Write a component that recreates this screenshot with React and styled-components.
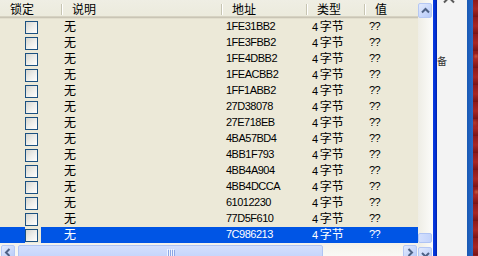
import React from 'react';
import styled, { createGlobalStyle } from 'styled-components';

const GlobalStyle = createGlobalStyle`
  html, body {
    margin: 0;
    padding: 0;
    background: #ECE9D8;
    overflow: hidden;
  }
  body {
    font-family: "Liberation Sans", "Noto Sans CJK SC", sans-serif;
  }
`;

const columns = [
  { key: 'lock', title: '锁定', width: 62 },
  { key: 'desc', title: '说明', width: 160 },
  { key: 'addr', title: '地址', width: 85 },
  { key: 'type', title: '类型', width: 58 },
  { key: 'value', title: '值', width: 53 },
];

const addresses = [
  '1FE31BB2', '1FE3FBB2', '1FE4DBB2', '1FEACBB2', '1FF1ABB2', '27D38078', '27E718EB',
  '4BA57BD4', '4BB1F793', '4BB4A904', '4BB4DCCA', '61012230', '77D5F610', '7C986213',
];

const Arrow = ({ dir }) => {
  const paths = {
    up: 'M1 5.5 L4.5 2 L8 5.5',
    down: 'M1 2 L4.5 5.5 L8 2',
    left: 'M5.5 1 L2 4.5 L5.5 8',
    right: 'M2.5 1 L6 4.5 L2.5 8',
  };
  const w = dir === 'up' || dir === 'down' ? 9 : 8;
  const h = dir === 'up' || dir === 'down' ? 8 : 9;
  return (
    <svg width={w} height={h} viewBox={`0 0 ${w} ${h}`}>
      <path d={paths[dir]} fill="none" stroke="#4D6185" strokeWidth="2" />
    </svg>
  );
};

const App = () => {
  return (
    <>
      <GlobalStyle />
      <Page>
        <ListPane>
          <Header>
            {columns.map((c, i) => (
              <HeaderCell key={c.key} $w={c.width} $sep={i < columns.length - 1}>
                {c.title}
              </HeaderCell>
            ))}
          </Header>

          {addresses.map((addr, i) => {
            const selected = i === addresses.length - 1;
            return (
              <Row key={addr} $selected={selected}>
                <CheckCell>
                  <CheckHolder>
                    <CheckBox />
                  </CheckHolder>
                </CheckCell>
                <Cell $w={160} $pad={2}>无</Cell>
                <Cell $w={85} $pad={4} $num>{addr}</Cell>
                <Cell $w={58} $pad={5}>
                  <Digit>4</Digit>字节
                </Cell>
                <Cell $w={53} $pad={4} $num>??</Cell>
              </Row>
            );
          })}

          <HScroll>
            <ScrollButton>
              <Arrow dir="left" />
            </ScrollButton>
            <HThumb $w={305}>
              <Grip>
                <span /><span /><span /><span />
              </Grip>
            </HThumb>
            <Track />
            <ScrollButton>
              <Arrow dir="right" />
            </ScrollButton>
          </HScroll>
        </ListPane>

        <VScroll>
          <ScrollButton>
            <Arrow dir="up" />
          </ScrollButton>
          <Track />
          <VThumb />
          <ScrollButton $gapTop={4}>
            <Arrow dir="down" />
          </ScrollButton>
        </VScroll>

        <WindowEdge />

        <BackPanel>
          <TopChevron width="12" height="8" viewBox="0 0 12 8">
            <path d="M1 6.5 L6 1.5 L11 6.5" fill="none" stroke="#5A5A5A" strokeWidth="2" />
          </TopChevron>
          <BackLabel>备</BackLabel>
        </BackPanel>

        <TaskStrip />
        <Wallpaper />
      </Page>
    </>
  );
};

const Page = styled.div`
  display: flex;
  width: 478px;
  height: 256px;
  overflow: hidden;
  background: #ECE9D8;
`;

const ListPane = styled.div`
  display: flex;
  flex-direction: column;
  width: 418px;
  flex-shrink: 0;
`;

const Header = styled.div`
  display: flex;
  height: 19px;
  box-sizing: border-box;
  background: linear-gradient(#EFEEE4, #EBEADB);
  box-shadow: inset 0 -1px #E2DECD, inset 0 -2px #C9C5B5, inset 0 -3px #D6D2C2;
  flex-shrink: 0;
`;

const HeaderCell = styled.div`
  position: relative;
  width: ${(p) => p.$w}px;
  box-sizing: border-box;
  padding: 1px 0 0 10px;
  height: 16px;
  font-family: "Noto Sans CJK SC", sans-serif;
  font-size: 12px;
  line-height: 16px;
  color: #000;

  &::after {
    content: '';
    display: ${(p) => (p.$sep ? 'block' : 'none')};
    position: absolute;
    right: 0;
    top: 4px;
    width: 1px;
    height: 11px;
    background: #C7C5B2;
    box-shadow: 1px 0 #FFFFFF;
  }
`;

const Row = styled.div`
  display: flex;
  align-items: flex-start;
  height: 16px;
  flex-shrink: 0;
  background: ${(p) => (p.$selected ? '#0055E5' : 'transparent')};
  color: ${(p) => (p.$selected ? '#FFFFFF' : '#000000')};
`;

const CheckCell = styled.div`
  width: 62px;
  box-sizing: border-box;
  padding-left: 25px;
`;

const CheckHolder = styled.div`
  display: flex;
  width: 16px;
  height: 16px;
  box-sizing: border-box;
  padding-top: 2px;
  background: #ECE9D8;
`;

const CheckBox = styled.div`
  width: 13px;
  height: 13px;
  box-sizing: border-box;
  border: 1px solid #1C5180;
  background: linear-gradient(135deg, #D6D6D0 0%, #EDEDE9 50%, #FFFFFF 100%);
`;

const Cell = styled.div`
  width: ${(p) => p.$w}px;
  box-sizing: border-box;
  padding-left: ${(p) => p.$pad}px;
  font-family: ${(p) =>
    p.$num ? '"Liberation Sans", sans-serif' : '"Noto Sans CJK SC", sans-serif'};
  font-size: ${(p) => (p.$num ? 11 : 12)}px;
  letter-spacing: ${(p) => (p.$num ? '-0.5px' : '0')};
  line-height: 14px;
  white-space: nowrap;
`;

const Digit = styled.span`
  font-family: "Liberation Sans", sans-serif;
  font-size: 11px;
  margin-right: 1.5px;
`;

const ScrollButton = styled.div`
  display: flex;
  align-items: center;
  justify-content: center;
  width: 14px;
  height: 15px;
  box-sizing: border-box;
  flex-shrink: 0;
  margin-top: ${(p) => p.$gapTop || 0}px;
  border: 1px solid #B5C8F4;
  border-radius: 2px;
  background: linear-gradient(135deg, #E2EAFD 0%, #C9D8FB 55%, #B6CAF8 100%);
`;

const Track = styled.div`
  flex: 1;
`;

const HScroll = styled.div`
  display: flex;
  height: 17px;
  box-sizing: border-box;
  padding: 2px 1px 0 1px;
  flex-shrink: 0;
  background: linear-gradient(#F3F1EA, #FBFBF8);
`;

const HThumb = styled.div`
  display: flex;
  align-items: center;
  justify-content: center;
  width: ${(p) => p.$w}px;
  height: 15px;
  box-sizing: border-box;
  margin-left: 3px;
  border: 1px solid #AFC4F4;
  border-radius: 2px;
  background: linear-gradient(#D3DFFD, #C2D3FB);
`;

const Grip = styled.div`
  display: flex;
  gap: 1px;
  height: 7px;

  & > span {
    width: 1px;
    background: #EEF4FE;
    box-shadow: 1px 1px #8CA7E6;
  }
`;

const VScroll = styled.div`
  display: flex;
  flex-direction: column;
  width: 15px;
  height: 262px;
  box-sizing: border-box;
  padding-top: 3px;
  flex-shrink: 0;
  background: linear-gradient(to right, #EEEDE5, #FCFCFA);
`;

const VThumb = styled.div`
  width: 14px;
  height: 10px;
  box-sizing: border-box;
  flex-shrink: 0;
  border: 1px solid #AFC4F4;
  border-radius: 2px;
  background: linear-gradient(to right, #D3DFFD, #C2D3FB);
`;

const WindowEdge = styled.div`
  width: 4px;
  flex-shrink: 0;
  background: linear-gradient(to right, #0A3BE4, #0030D0 60%, #0020A8);
`;

const BackPanel = styled.div`
  display: flex;
  flex-direction: column;
  width: 30px;
  flex-shrink: 0;
  overflow: hidden;
  background: #F3F3F3;
`;

const TopChevron = styled.svg`
  display: block;
  margin: -4px 0 0 6px;
`;

const BackLabel = styled.div`
  margin: 51px 0 0 0;
  font-family: "Noto Sans CJK SC", sans-serif;
  font-size: 10px;
  line-height: 11px;
  color: #333;
`;

const TaskStrip = styled.div`
  width: 6px;
  flex-shrink: 0;
  background: linear-gradient(to right, #1758B4, #2A6AC6);
`;

const Wallpaper = styled.div`
  flex: 1;
  background:
    radial-gradient(circle at 60% 22%, #C8503A 0, transparent 3px),
    radial-gradient(circle at 30% 48%, #B23A2E 0, transparent 4px),
    radial-gradient(circle at 70% 75%, #C45A3E 0, transparent 3px),
    repeating-linear-gradient(#8E1A1C 0, #A82624 9px, #7A1416 17px);
`;

export default App;
